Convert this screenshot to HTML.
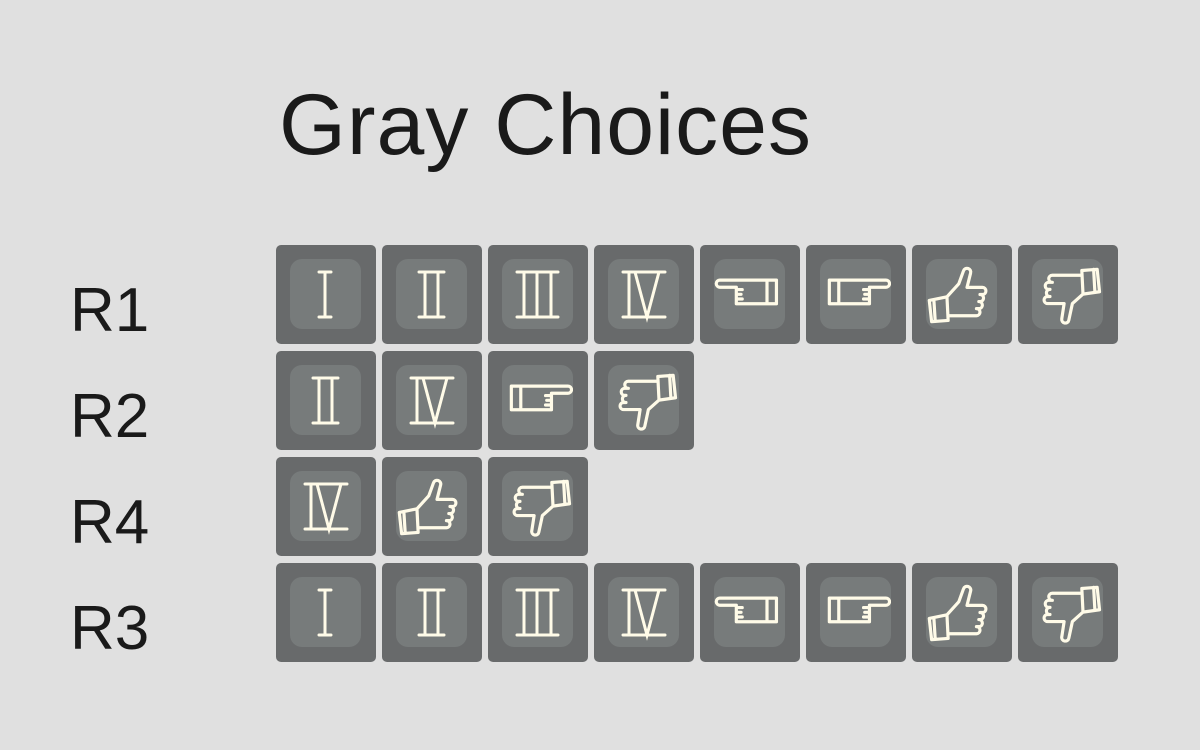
<!DOCTYPE html>
<html><head><meta charset="utf-8"><style>
body{margin:0;width:1200px;height:750px;background:#e0e0e0;position:relative;overflow:hidden;font-family:"Liberation Sans",sans-serif;}
.t{position:absolute;left:279px;top:82px;font-size:86px;color:#1a1a1a;font-weight:300;letter-spacing:1px;line-height:1}
.l{position:absolute;left:70px;font-size:62px;color:#1a1a1a;line-height:1}
.k{position:absolute;width:100px;height:99px;background:#686a6b;border-radius:5px}
.k svg{position:absolute;left:14px;top:14px}
</style></head><body>
<div class="t">Gray Choices</div>
<div class="l" style="top:280px">R1</div>
<div class="l" style="top:386px">R2</div>
<div class="l" style="top:492px">R4</div>
<div class="l" style="top:598px">R3</div>
<svg width="0" height="0" style="position:absolute">
<defs>
<g id="bg"><rect width="71" height="70" rx="12" fill="#777b7b"/></g>
<g id="i1" fill="none" stroke="#fffbe8" stroke-width="3" stroke-linecap="round"><use href="#bg" stroke="none"/><path d="M29 13H41M29 58H41M35 13V58"/></g>
<g id="i2" fill="none" stroke="#fffbe8" stroke-width="3" stroke-linecap="round"><use href="#bg" stroke="none"/><path d="M23 13H48M23 58H48M29 13V58M42 13V58"/></g>
<g id="i3" fill="none" stroke="#fffbe8" stroke-width="3" stroke-linecap="round"><use href="#bg" stroke="none"/><path d="M15 13H56M15 58H56M22 13V58M35 13V58M49 13V58"/></g>
<g id="i4" fill="none" stroke="#fffbe8" stroke-width="3" stroke-linecap="round"><use href="#bg" stroke="none"/><path d="M15 13H57M15 58H57M21 13V58M27 13L39 58L51 13"/></g>
<g id="hl"><use href="#bg"/><g fill="none" stroke="#fffbe8" stroke-width="2.7" stroke-linejoin="round" stroke-linecap="round" transform="translate(-6,-6) scale(1.18)"><path d="M58 23H10a3 3 0 0 0 0 6H24V43H58ZM50 23V43M24 31h5M24 35h4M24 39h5"/></g></g>
<g id="hr"><use href="#bg"/><g fill="none" stroke="#fffbe8" stroke-width="2.7" stroke-linejoin="round" stroke-linecap="round" transform="translate(-6,-6) scale(1.18)"><path d="M13 23H61a3 3 0 0 1 0 6H47V43H13ZM21 23V43M47 31h-5M47 35h-4M47 39h-5"/></g></g>
<g id="tu"><use href="#bg"/><g fill="none" stroke="#fffbe8" stroke-width="2.7" stroke-linejoin="round" stroke-linecap="round" transform="translate(-5,-7) scale(1.18)"><path d="M7 41L22 38L23 58L9 59ZM22 38L32 27L36 16a3 3 0 0 1 6 2L39 30H52a3 3 0 0 1 0 6H50a3 3 0 0 1 0 6H49a3 3 0 0 1 0 6H47a3 3 0 0 1 0 6H23M11 42L12 58"/></g></g>
<g id="td"><use href="#bg"/><g fill="none" stroke="#fffbe8" stroke-width="2.7" stroke-linejoin="round" stroke-linecap="round" transform="translate(-8,-5) scale(1.18)"><path d="M64 32L50 34L49 14L62 13ZM50 34L41 42L38 56a3 3 0 0 1 -6 -1L34 42H20a3 3 0 0 1 0 -6H22a3 3 0 0 1 0 -6H21a3 3 0 0 1 0 -6H24a3 3 0 0 1 0 -6H49M59 13L60 31"/></g></g>
</defs></svg>
<!-- R1 -->
<div class="k" style="left:276px;top:245px"><svg width="71" height="70"><use href="#i1"/></svg></div>
<div class="k" style="left:382px;top:245px"><svg width="71" height="70"><use href="#i2"/></svg></div>
<div class="k" style="left:488px;top:245px"><svg width="71" height="70"><use href="#i3"/></svg></div>
<div class="k" style="left:594px;top:245px"><svg width="71" height="70"><use href="#i4"/></svg></div>
<div class="k" style="left:700px;top:245px"><svg width="71" height="70"><use href="#hl"/></svg></div>
<div class="k" style="left:806px;top:245px"><svg width="71" height="70"><use href="#hr"/></svg></div>
<div class="k" style="left:912px;top:245px"><svg width="71" height="70"><use href="#tu"/></svg></div>
<div class="k" style="left:1018px;top:245px"><svg width="71" height="70"><use href="#td"/></svg></div>
<!-- R2 -->
<div class="k" style="left:276px;top:351px"><svg width="71" height="70"><use href="#i2"/></svg></div>
<div class="k" style="left:382px;top:351px"><svg width="71" height="70"><use href="#i4"/></svg></div>
<div class="k" style="left:488px;top:351px"><svg width="71" height="70"><use href="#hr"/></svg></div>
<div class="k" style="left:594px;top:351px"><svg width="71" height="70"><use href="#td"/></svg></div>
<!-- R4 -->
<div class="k" style="left:276px;top:457px"><svg width="71" height="70"><use href="#i4"/></svg></div>
<div class="k" style="left:382px;top:457px"><svg width="71" height="70"><use href="#tu"/></svg></div>
<div class="k" style="left:488px;top:457px"><svg width="71" height="70"><use href="#td"/></svg></div>
<!-- R3 -->
<div class="k" style="left:276px;top:563px"><svg width="71" height="70"><use href="#i1"/></svg></div>
<div class="k" style="left:382px;top:563px"><svg width="71" height="70"><use href="#i2"/></svg></div>
<div class="k" style="left:488px;top:563px"><svg width="71" height="70"><use href="#i3"/></svg></div>
<div class="k" style="left:594px;top:563px"><svg width="71" height="70"><use href="#i4"/></svg></div>
<div class="k" style="left:700px;top:563px"><svg width="71" height="70"><use href="#hl"/></svg></div>
<div class="k" style="left:806px;top:563px"><svg width="71" height="70"><use href="#hr"/></svg></div>
<div class="k" style="left:912px;top:563px"><svg width="71" height="70"><use href="#tu"/></svg></div>
<div class="k" style="left:1018px;top:563px"><svg width="71" height="70"><use href="#td"/></svg></div>
</body></html>
